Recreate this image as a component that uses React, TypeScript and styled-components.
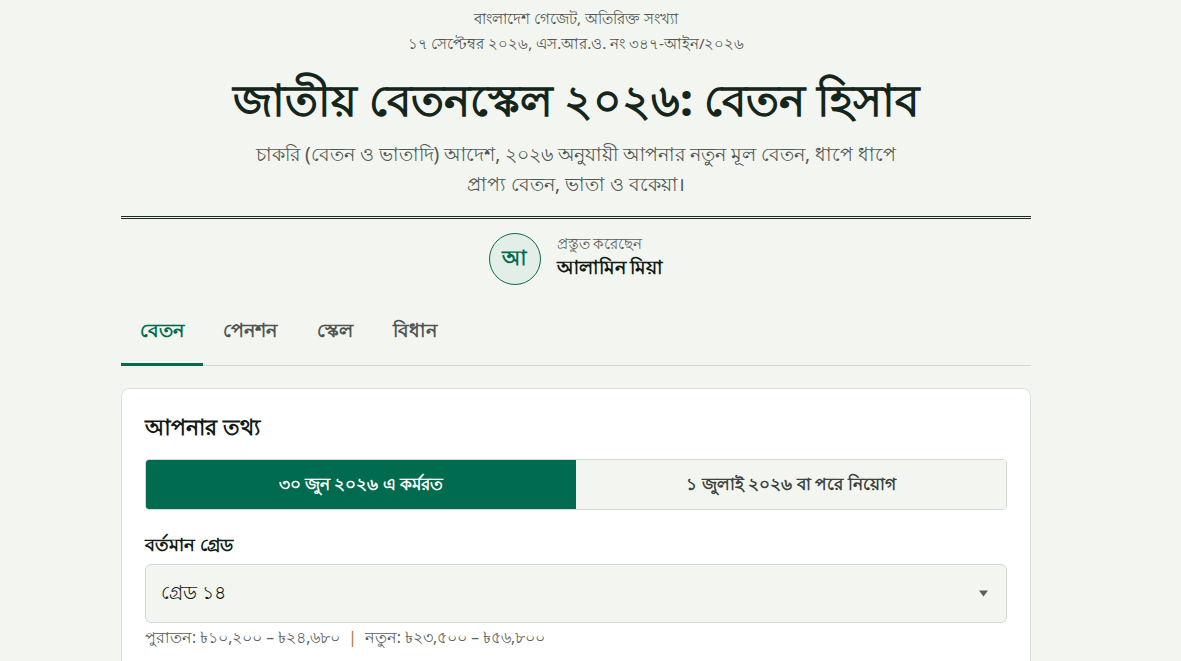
import React from "react";
import styled, { createGlobalStyle } from "styled-components";

const Global = createGlobalStyle`
  html, body { margin: 0; padding: 0; background: #f3f5f0; }
  body { font-family: "Noto Sans", "DejaVu Sans", sans-serif; color: #17261d; }
  * { box-sizing: border-box; }
`;

const Page = styled.div`
  display: flex;
  justify-content: center;
  padding: 0 29px 40px 0;
`;

const Main = styled.main`
  width: 910px;
  display: flex;
  flex-direction: column;
`;

const Header = styled.header`
  display: flex;
  flex-direction: column;
  align-items: center;
  text-align: center;
  padding-top: 6px;
`;

const Gazette = styled.div`
  font-size: 15px;
  line-height: 25px;
  color: #4f5651;
`;

const Title = styled.h1`
  margin: 13px 0 0;
  font-size: 44px;
  line-height: 60px;
  font-weight: 800;
  color: #14261c;
`;

const Lead = styled.p`
  margin: 10px 0 0;
  max-width: 660px;
  font-size: 19px;
  line-height: 30px;
  color: #4f5651;
`;

const Rule = styled.div`
  margin-top: 17px;
  border-top: 3px double #1b2a21;
`;

const Author = styled.div`
  display: flex;
  align-items: center;
  justify-content: center;
  gap: 16px;
  margin-top: 14px;
`;

const Avatar = styled.div`
  width: 52px;
  height: 52px;
  border-radius: 50%;
  border: 1px solid #0d6b4f;
  background: #e4eee8;
  color: #006b4f;
  font-weight: 700;
  font-size: 21px;
  display: flex;
  align-items: center;
  justify-content: center;
`;

const AuthorText = styled.div`
  display: flex;
  flex-direction: column;
  text-align: left;
  margin-top: -6px;
`;

const AuthorLabel = styled.span`
  font-size: 14.5px;
  line-height: 22px;
  color: #5a605c;
`;

const AuthorName = styled.span`
  font-size: 19px;
  line-height: 26px;
  font-weight: 700;
  color: #111a14;
`;

const Tabs = styled.nav`
  display: flex;
  margin-top: 16px;
  border-bottom: 1px solid #d3dad5;
`;

const Tab = styled.button<{ $active?: boolean }>`
  border: none;
  background: none;
  font-family: inherit;
  font-size: 19px;
  font-weight: 700;
  padding: 15px 20px 15px;
  margin-bottom: -1px;
  color: ${(p) => (p.$active ? "#006b4f" : "#4f5651")};
  border-bottom: 3px solid ${(p) => (p.$active ? "#006b4f" : "transparent")};
  cursor: pointer;
  &:first-child {
    padding-left: 19px;
    padding-right: 19px;
  }
`;

const Card = styled.section`
  margin-top: 22px;
  background: #ffffff;
  border: 1px solid #dde3df;
  border-radius: 8px;
  padding: 22px 23px 24px;
`;

const CardTitle = styled.h2`
  margin: 0;
  font-size: 21.5px;
  line-height: 32px;
  font-weight: 700;
  color: #111a14;
`;

const Segmented = styled.div`
  margin-top: 16px;
  display: grid;
  grid-template-columns: 1fr 1fr;
  border: 1px solid #d3dad5;
  border-radius: 4px;
  overflow: hidden;
  height: 51px;
`;

const Segment = styled.button<{ $active?: boolean }>`
  border: none;
  font-family: inherit;
  font-size: 17px;
  font-weight: 700;
  background: ${(p) => (p.$active ? "#006b4f" : "#f3f5f1")};
  color: ${(p) => (p.$active ? "#ffffff" : "#3c423e")};
  cursor: pointer;
`;

const FieldLabel = styled.label`
  display: block;
  margin-top: 21px;
  font-size: 18px;
  line-height: 26px;
  font-weight: 700;
  color: #111a14;
`;

const Select = styled.div`
  margin-top: 7px;
  height: 59px;
  border: 1px solid #d3dad5;
  border-radius: 6px;
  background: #f3f5f1;
  display: flex;
  align-items: center;
  justify-content: space-between;
  padding: 0 18px 0 15px;
  font-size: 19px;
  color: #111a14;
`;

const Hint = styled.div`
  margin-top: 3px;
  font-size: 15.5px;
  line-height: 22px;
  color: #5a605c;
`;

const Sep = styled.span`
  color: #b5712f;
  margin: 0 8px;
`;

export default function App() {
  return (
    <>
      <Global />
      <Page>
        <Main>
          <Header>
            <Gazette>
              বাংলাদেশ গেজেট, অতিরিক্ত সংখ্যা
              <br />
              ১৭ সেপ্টেম্বর ২০২৬, এস.আর.ও. নং ৩৪৭-আইন/২০২৬
            </Gazette>
            <Title>জাতীয় বেতনস্কেল ২০২৬: বেতন হিসাব</Title>
            <Lead>
              চাকরি (বেতন ও ভাতাদি) আদেশ, ২০২৬ অনুযায়ী আপনার নতুন মূল বেতন, ধাপে ধাপে প্রাপ্য
              বেতন, ভাতা ও বকেয়া।
            </Lead>
          </Header>
          <Rule />
          <Author>
            <Avatar>আ</Avatar>
            <AuthorText>
              <AuthorLabel>প্রস্তুত করেছেন</AuthorLabel>
              <AuthorName>আলামিন মিয়া</AuthorName>
            </AuthorText>
          </Author>
          <Tabs>
            <Tab $active>বেতন</Tab>
            <Tab>পেনশন</Tab>
            <Tab>স্কেল</Tab>
            <Tab>বিধান</Tab>
          </Tabs>
          <Card>
            <CardTitle>আপনার তথ্য</CardTitle>
            <Segmented>
              <Segment $active>৩০ জুন ২০২৬ এ কর্মরত</Segment>
              <Segment>১ জুলাই ২০২৬ বা পরে নিয়োগ</Segment>
            </Segmented>
            <FieldLabel>বর্তমান গ্রেড</FieldLabel>
            <Select>
              <span>গ্রেড ১৪</span>
              <svg width="9" height="7" viewBox="0 0 9 7">
                <path d="M0 0.5 L9 0.5 L4.5 6.5 Z" fill="#5a605c" />
              </svg>
            </Select>
            <Hint>
              পুরাতন: ৳১০,২০০ – ৳২৪,৬৮০<Sep>|</Sep>নতুন: ৳২৩,৫০০ – ৳৫৬,৮০০
            </Hint>
          </Card>
        </Main>
      </Page>
    </>
  );
}
